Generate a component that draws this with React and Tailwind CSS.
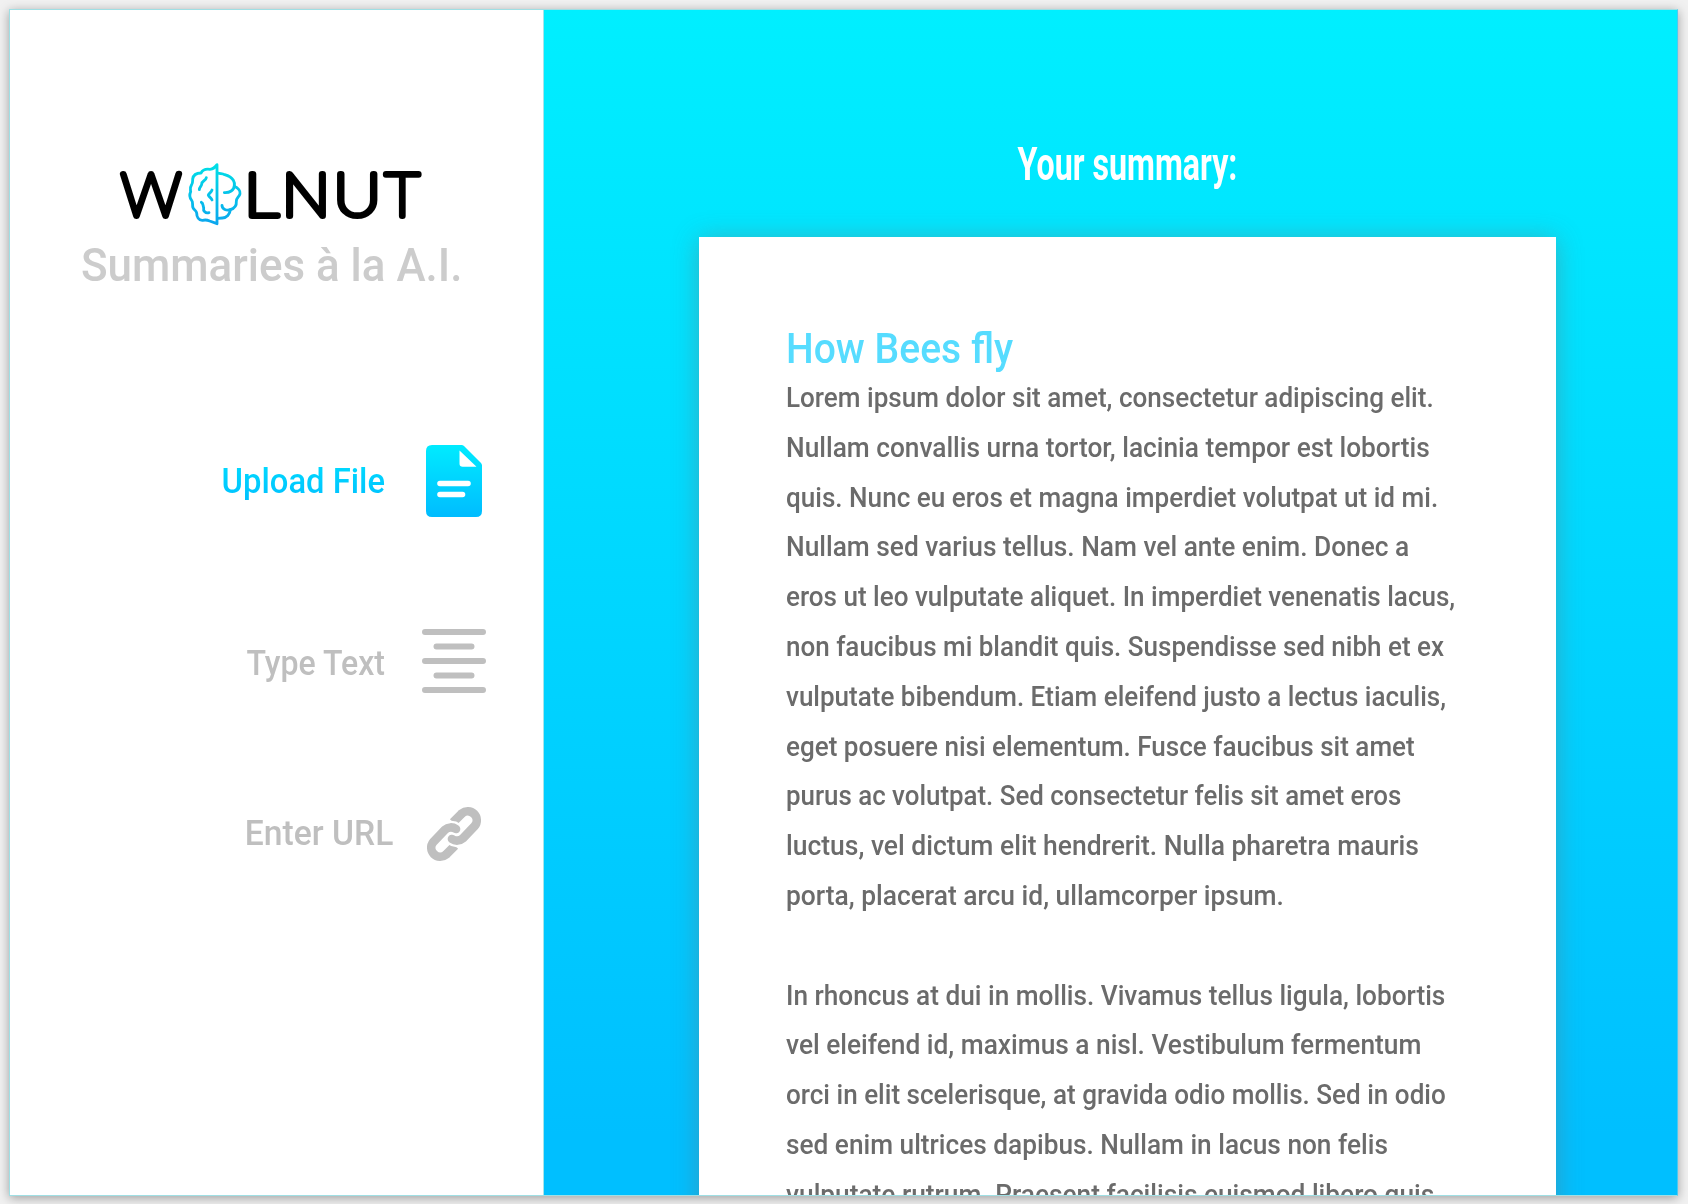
import React from "react";

const paragraphs = [
  [
    ["Lorem ipsum dolor sit amet, consectetur adipiscing elit.", "scale-x-[.931]"],
    ["Nullam convallis urna tortor, lacinia tempor est lobortis", "scale-x-[.938]"],
    ["quis. Nunc eu eros et magna imperdiet volutpat ut id mi.", "scale-x-[.932]"],
    ["Nullam sed varius tellus. Nam vel ante enim. Donec a", "scale-x-[.939]"],
    ["eros ut leo vulputate aliquet. In imperdiet venenatis lacus,", "scale-x-[.930]"],
    ["non faucibus mi blandit quis. Suspendisse sed nibh et ex", "scale-x-[.929]"],
    ["vulputate bibendum. Etiam eleifend justo a lectus iaculis,", "scale-x-[.929]"],
    ["eget posuere nisi elementum. Fusce faucibus sit amet", "scale-x-[.930]"],
    ["purus ac volutpat. Sed consectetur felis sit amet eros", "scale-x-[.924]"],
    ["luctus, vel dictum elit hendrerit. Nulla pharetra mauris", "scale-x-[.945]"],
    ["porta, placerat arcu id, ullamcorper ipsum.", "scale-x-[.942]"],
  ],
  [
    ["In rhoncus at dui in mollis. Vivamus tellus ligula, lobortis", "scale-x-[.936]"],
    ["vel eleifend id, maximus a nisl. Vestibulum fermentum", "scale-x-[.939]"],
    ["orci in elit scelerisque, at gravida odio mollis. Sed in odio", "scale-x-[.931]"],
    ["sed enim ultrices dapibus. Nullam in lacus non felis", "scale-x-[.937]"],
    ["vulputate rutrum. Praesent facilisis euismod libero quis", "scale-x-[.938]"],
  ],
];

function Logo() {
  return (
    <svg className="h-[68px] w-[308px] overflow-visible" viewBox="118 160 308 68" fill="none" role="img" aria-label="Wolnut">
      <defs>
        <linearGradient id="brain" gradientUnits="userSpaceOnUse" x1="0" y1="27" x2="0" y2="208">
          <stop offset="0" stopColor="#00dfe6" />
          <stop offset="1" stopColor="#0ba6ee" />
        </linearGradient>
      </defs>
      <g
        className="font-['Lato'] font-thin"
        fontSize="60"
        fill="#000"
        stroke="#000"
        strokeWidth="6"
        strokeLinejoin="round"
        strokeLinecap="round"
      >
        <text transform="translate(121 216.3) scale(1 1)">W</text>
        <text transform="translate(244 216.3) scale(1.15 1)">L</text>
        <text transform="translate(281.700 216.3) scale(1.08 1)">N</text>
        <text transform="translate(333.300 216.3) scale(1.11 1)">U</text>
        <text transform="translate(385 216.3) scale(1.01 1)">T</text>
      </g>
      <g
        transform="translate(180 155) scale(.33333)"
        stroke="url(#brain)"
        strokeWidth="8.5"
        strokeLinecap="round"
        strokeLinejoin="round"
      >
        <path d="M111 29C104 38 100 43 90 43C76 41 68 44 63 54C50 54 40 60 38 72C38 80 39 84 34 91C29 98 31 103 32 110C28 119 28 128 35 136C40 142 36 150 39 158C41 165 49 166 50 174C50 186 56 197 68 196C76 194 82 195 89 198L111 206Z" />
        <path d="M113 54C121 57 126 55 134 59C145 62 154 66 160 76C165 84 164 89 163 94C174 98 182 108 180 116C178 126 168 129 169 139C170 150 163 160 151 164C150 178 140 189 127 189L113 190" />
        <path d="M163 92C162 106 149 114 133 113" />
        <path d="M151 164C140 168 126 163 126 151" />
        <path d="M79 68C78 78 64 77 65 88C65 93 58 96 58 104" />
        <path d="M96 105C94 113 86 115 85 120C87 127 94 127 96 135" />
        <path d="M64 142C71 145 68 152 71 158C69 168 76 176 87 173" />
      </g>
    </svg>
  );
}

function FileIcon() {
  return (
    <svg className="h-[72px] w-14" viewBox="0 0 56 72">
      <defs>
        <linearGradient id="file" x1="0" y1="0" x2="0" y2="1">
          <stop offset="0" stopColor="#00ebff" />
          <stop offset="1" stopColor="#00bcff" />
        </linearGradient>
      </defs>
      <path
        fill="url(#file)"
        fillRule="evenodd"
        d="M6 0H35.5Q37 0 38 1L55 18Q56 19 56 20.500V66Q56 72 50 72H6Q0 72 0 66V6Q0 0 6 0ZM33.500 5.500V18.500Q33.500 21.700 36.700 21.700H50.500Z"
      />
      <path d="M14 38.500H42M14 49.500H36.500" stroke="#fff" strokeWidth="5.600" strokeLinecap="round" />
    </svg>
  );
}

function CenterTextIcon() {
  return (
    <svg className="size-16" viewBox="0 0 64 64" stroke="#bfbfbf" strokeWidth="6" strokeLinecap="round">
      <path d="M3 3H61M14.500 17.500H49.500M3 32H61M14.500 46.500H49.500M3 61H61" />
    </svg>
  );
}

function ChainIcon() {
  return (
    <svg className="size-14" viewBox="619 48 168 168" fill="none" strokeWidth="26">
      <path stroke="#bfbfbf" d="M679 194L706 167M727 70L700 97" />
      <path stroke="#fff" strokeWidth="38" d="M676 119A27 27 0 0 1 711 117M730 145A27 27 0 0 1 695 147" />
      <path
        stroke="#bfbfbf"
        strokeLinecap="round"
        strokeLinejoin="round"
        d="M679 194A27 27 0 0 1 641 156L676 119A27 27 0 0 1 709 117M727 70A27 27 0 0 1 765 108L730 145A27 27 0 0 1 697 147"
      />
    </svg>
  );
}

function NavItem({ label, labelClass, children }) {
  return (
    <a className="flex items-center justify-end">
      <span className={`origin-right text-[34.5px] leading-10 font-medium whitespace-nowrap ${labelClass}`}>{label}</span>
      <span className="flex w-16 justify-center">{children}</span>
    </a>
  );
}

export default function App() {
  return (
    <div className="h-[1204px] w-[1688px] overflow-hidden bg-[#f1f1f1] pt-[9px] pl-[9px] font-['Roboto',sans-serif]">
      <div className="flex h-[1187px] w-[1669px] overflow-hidden border border-[#9fdfe4] border-r-[#4cc8f0] bg-white shadow-[0_2px_10px_rgba(0,0,0,0.35)]">
        <aside className="flex w-[534px] shrink-0 flex-col border-r border-[#a6e4ea] bg-white pt-[150px]">
          <header className="flex flex-col items-center pr-[10px]">
            <Logo />
            <p className="mt-2.5 scale-x-[.955] text-[46px] leading-[54px] font-medium whitespace-nowrap text-[#cccccc]">
              Summaries à la A.I.
            </p>
          </header>
          <nav className="mt-[153px] flex flex-col pr-[57px]">
            <NavItem
              label="Upload File"
              labelClass="mr-[37px] scale-x-[.95] bg-linear-to-b from-[#00dcff] to-[#00c0ff] bg-clip-text text-transparent"
            >
              <FileIcon />
            </NavItem>
            <div className="mt-28">
              <NavItem label="Type Text" labelClass="mr-[37px] mt-1 scale-x-[.93] text-[#bfbfbf]">
                <CenterTextIcon />
              </NavItem>
            </div>
            <div className="mt-[113px]">
              <NavItem label="Enter URL" labelClass="mr-[29px] -mt-0.5 scale-x-[.975] text-[#bfbfbf]">
                <ChainIcon />
              </NavItem>
            </div>
          </nav>
        </aside>

        <main className="h-full flex-1 overflow-hidden bg-linear-to-b from-[#00efff] to-[#00bfff] to-95% pt-[127px] pl-[155px]">
          <div className="flex w-[857px] flex-col">
            <h1 className="scale-x-[.7] text-center text-[46px] leading-[54px] font-bold whitespace-nowrap text-white">
              Your summary:
            </h1>
            <article className="mt-[45.5px] h-[1100px] bg-white pt-[88.6px] pl-[87px] shadow-[0_2px_24px_rgba(112,112,112,0.45)]">
              <h2 className="origin-left scale-x-[.93] text-[42px] leading-[48px] font-medium whitespace-nowrap text-[#56dcff]">
                How Bees fly
              </h2>
              <div className="flex flex-col gap-[49.8px] text-[28px] leading-[49.8px] font-medium text-[#6b6b6b]">
                {paragraphs.map((lines, i) => (
                  <p key={i}>
                    {lines.map(([text, fit]) => (
                      <span key={text} className={`block origin-left whitespace-nowrap ${fit}`}>
                        {text}
                      </span>
                    ))}
                  </p>
                ))}
              </div>
            </article>
          </div>
        </main>
      </div>
    </div>
  );
}
